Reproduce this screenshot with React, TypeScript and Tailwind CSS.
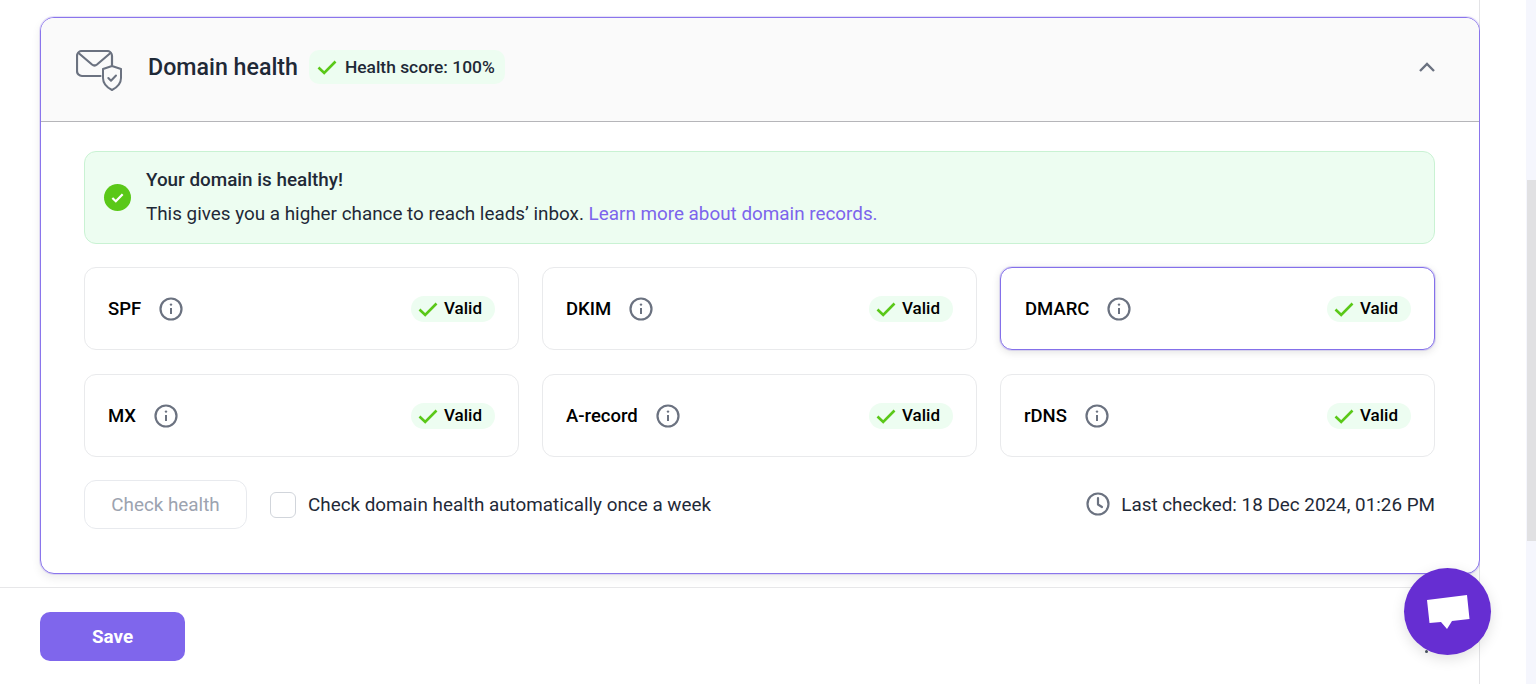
import React from 'react';

const CheckMark = ({ className = 'w-5 h-5' }: { className?: string }) => (
  <svg viewBox="0 0 20 20" fill="none" className={className}>
    <path d="M1.5 10.5 L7.2 16 L18.5 4.5" stroke="#5ac818" strokeWidth="2.6" />
  </svg>
);

const InfoIcon = () => (
  <svg viewBox="0 0 24 24" fill="none" className="w-6 h-6 shrink-0">
    <circle cx="12" cy="12" r="10.5" stroke="#6b7280" strokeWidth="2.2" />
    <path d="M12 11v6" stroke="#6b7280" strokeWidth="2" />
    <circle cx="12" cy="7.6" r="1.2" fill="#6b7280" />
  </svg>
);

const MailShieldIcon = () => (
  <svg viewBox="0 0 46 41" fill="none" className="w-[46px] h-[41px] shrink-0 mt-[6px]">
    <path d="M24.5 26H6a5 5 0 0 1-5-5V6a5 5 0 0 1 5-5h25a5 5 0 0 1 5 5v9" stroke="#6b7280" strokeWidth="2.2" strokeLinecap="round" />
    <path d="M2.5 3 L16 14.5 a4 4 0 0 0 5 0 L34.5 3" stroke="#6b7280" strokeWidth="2.2" strokeLinecap="round" />
    <path d="M36 16 L45 19 V28 C45 34 40 38 36 40 C32 38 27 34 27 28 V19 Z" stroke="#6b7280" strokeWidth="2" strokeLinejoin="round" />
    <path d="M32.3 28 L35 30.8 L40 25.5" stroke="#6b7280" strokeWidth="2" strokeLinecap="round" strokeLinejoin="round" />
  </svg>
);

const ClockIcon = () => (
  <svg viewBox="0 0 24 24" fill="none" className="w-6 h-6 shrink-0">
    <circle cx="12" cy="12" r="10.5" stroke="#6b7280" strokeWidth="2.2" />
    <path d="M12 6v6.5l4 2.5" stroke="#6b7280" strokeWidth="2.2" strokeLinecap="round" strokeLinejoin="round" />
  </svg>
);

const ValidBadge = () => (
  <div className="flex items-center gap-[6px] h-[26px] pl-[7px] pr-[13px] rounded-full bg-[#edfdf1]">
    <CheckMark />
    <span className="text-[17px] font-medium text-black leading-none">Valid</span>
  </div>
);

const RecordCard = ({ name, active }: { name: string; active?: boolean }) => (
  <div
    className={
      active
        ? 'flex items-center justify-between h-[83px] pl-[24px] pr-[23px] bg-white rounded-[12px] border border-[#8470ea] shadow-[0_0_0_1px_rgba(132,112,234,0.2),0_2px_8px_rgba(0,0,0,0.12)]'
        : 'flex items-center justify-between h-[83px] pl-[23px] pr-[23px] bg-white rounded-[12px] border border-[#e9eaec]'
    }
  >
    <div className="flex items-center gap-[18px]">
      <span className="text-[18.5px] font-medium text-black pt-[2px]">{name}</span>
      <InfoIcon />
    </div>
    <ValidBadge />
  </div>
);

const records = ['SPF', 'DKIM', 'DMARC', 'MX', 'A-record', 'rDNS'];

export default function App() {
  return (
    <div className="flex h-[684px] overflow-hidden bg-white font-['Roboto',sans-serif] relative">
      <div className="w-[1480px] shrink-0 border-r border-[#e3e3e6] flex flex-col">
        <div className="pl-[40px] pt-[17px] pb-[13px]">
          <div className="h-[557px] -mr-px rounded-[14px] border border-[#8a75ec] bg-white overflow-hidden shadow-[0_0_0_1px_rgba(138,117,236,0.2),0_4px_10px_rgba(0,0,0,0.08)]">
            <div className="h-[104px] flex items-center bg-[#fafafa] border-b border-[#b5b5b9] pl-[35px] pr-[44px] pb-[5px]">
              <MailShieldIcon />
              <span className="ml-[26px] text-[23.2px] font-medium text-[#1f2937]">Domain health</span>
              <div className="ml-[11px] flex items-center gap-[8px] h-[34px] pl-[8px] pr-[10px] rounded-[10px] bg-[#edfdf1]">
                <CheckMark />
                <span className="text-[17.4px] font-medium text-[#1f2937]">Health score: 100%</span>
              </div>
              <svg viewBox="0 0 16 10" fill="none" className="ml-auto w-[16px] h-[10px]">
                <path d="M1 9 L8 2 L15 9" stroke="#6b7280" strokeWidth="2.4" />
              </svg>
            </div>
            <div className="pl-[43px] pr-[44px] pt-[29px]">
              <div className="h-[93px] flex items-center gap-[15px] pl-[19px] rounded-[12px] border border-[#c9f2d3] bg-[#edfdf1]">
                <div className="w-[27px] h-[27px] rounded-full bg-[#5ac818] flex items-center justify-center">
                  <svg viewBox="0 0 16 16" fill="none" className="w-[15px] h-[15px]">
                    <path d="M2.5 8.5 L6.2 12 L13.5 4.5" stroke="white" strokeWidth="2.4" />
                  </svg>
                </div>
                <div className="flex flex-col gap-[10px] mt-[-1px]">
                  <span className="text-[18.85px] leading-[24px] font-medium text-[#1f2937]">Your domain is healthy!</span>
                  <span className="text-[18.85px] leading-[24px] text-[#1f2937]">
                    This gives you a higher chance to reach leads’ inbox.{' '}
                    <span className="text-[#7c64ec]">Learn more about domain records.</span>
                  </span>
                </div>
              </div>
              <div className="grid grid-cols-3 gap-x-[23px] gap-y-[24px] mt-[23px]">
                {records.map(r => (
                  <RecordCard key={r} name={r} active={r === 'DMARC'} />
                ))}
              </div>
              <div className="flex items-center mt-[23px]">
                <div className="w-[163px] h-[49px] flex items-center justify-center pt-[2px] rounded-[12px] border border-[#e8eaee] bg-white text-[18.85px] text-[#9ca3af]">
                  Check health
                </div>
                <div className="ml-[23px] w-[26px] h-[26px] rounded-[6px] border border-[#d1d5db] bg-white" />
                <span className="ml-[12px] pt-[1px] text-[18.85px] text-[#1f2937]">Check domain health automatically once a week</span>
                <div className="ml-auto flex items-center gap-[11px]">
                  <ClockIcon />
                  <span className="pt-[1px] text-[18.85px] text-[#1f2937]">Last checked: 18 Dec 2024, 01:26 PM</span>
                </div>
              </div>
            </div>
          </div>
        </div>
        <div className="border-t border-[#e7e7e9] pt-[24px] pl-[40px]">
          <div className="w-[145px] h-[49px] flex items-center justify-center pt-[2px] rounded-[10px] bg-[#7f66ec] text-white text-[18.85px] font-bold">
            Save
          </div>
        </div>
      </div>
      <div className="w-[46px] shrink-0 bg-white" />
      <div className="w-[10px] shrink-0 bg-[#f5f6fd] flex flex-col items-end pt-[180px]">
        <div className="w-[9px] h-[361px] bg-[#e1e1e3]" />
      </div>
      <div className="absolute left-[1425px] top-[650px] w-[3px] h-[3px] rounded-full bg-[#4b5563]" />
      <div className="absolute left-[1404px] top-[568px] w-[87px] h-[87px] rounded-full bg-[#662ed2] shadow-[0_4px_14px_rgba(0,0,0,0.12)] flex items-center justify-center">
        <svg viewBox="0 0 44 36" className="w-[44px] h-[36px]">
          <path d="M1 6 L41 1 L43.5 25 L26 27 L21 35 L15 28 L3.5 29 Z" fill="white" />
        </svg>
      </div>
    </div>
  );
}
